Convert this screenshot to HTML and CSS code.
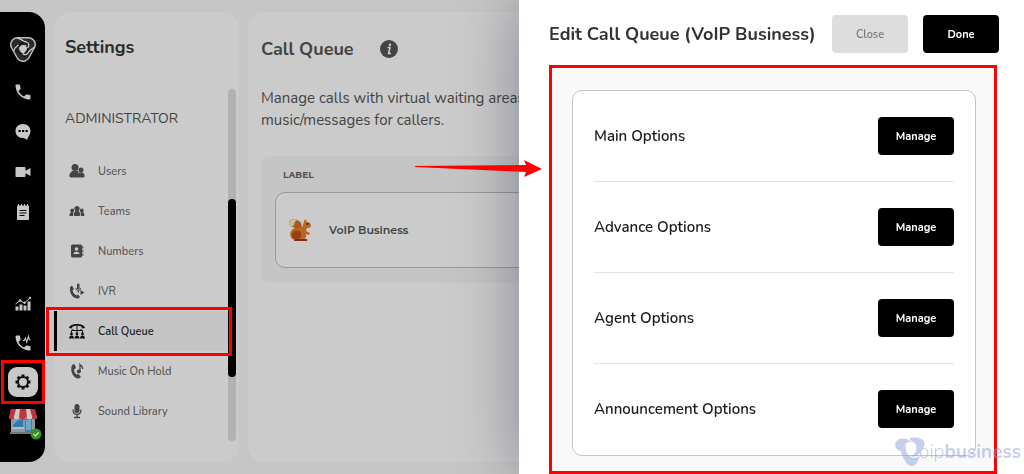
FILE: index.html
```html
<!DOCTYPE html>
<html lang="en">
	<head>
		<meta charset="UTF-8" />
		<meta name="viewport" content="width=device-width, initial-scale=1.0" />
		<title>Call Queue - Settings</title>
		<link rel="stylesheet" href="styles.css">
	</head>
	<body>
		<div class="app">
			<nav class="rail" aria-label="Main">
				<a href="#" class="rail-logo" aria-label="Home">
					<svg width="28" height="28" viewBox="0 0 28 28">
						<path d="M8.500 8.500h11L14 18.500z" fill="#bdbdbd" stroke="#bdbdbd" stroke-width="15" stroke-linejoin="round" />
						<path d="M8.500 8.500h11L14 18.500z" fill="#2a2a2a" stroke="#2a2a2a" stroke-width="12" stroke-linejoin="round" />
						<path d="M10 10c3-1.500 6-1.500 8.500 0 0 3-1.500 5.500-4.500 8-3-2-4.500-5-4-8z" fill="#c8c8c8" />
						<path d="M10 11c1-4 5-6 9-4M18 10c2 4 1 8-3 11M14.500 18C10 18 7 15 6.500 11" fill="none" stroke="#111" stroke-width="1.500" />
						<path d="M8 2c4 0 5 3.500 9.500 4 3 1 3 4 1 6M25 11c-2 3-5 2.500-6 6-1.500 2.500-4 2-5.500.5M5 15c0-3 2-4 4.500-6" fill="none" stroke="#c8c8c8" stroke-width="1.300" />
					</svg>
				</a>
				<a href="#" aria-label="Calls">
					<svg width="20" height="20" viewBox="0 0 24 24"><path class="solid" d="M6.600 10.800c1.400 2.800 3.800 5.100 6.600 6.600l2.200-2.200c.3-.3.7-.4 1-.2 1.100.4 2.300.6 3.600.6.600 0 1 .4 1 1V20c0 .6-.4 1-1 1C10.600 21 3 13.400 3 4c0-.6.400-1 1-1h3.500c.6 0 1 .4 1 1 0 1.300.2 2.500.6 3.600.1.300 0 .7-.3 1z" /></svg>
				</a>
				<a href="#" aria-label="Messages">
					<svg width="18" height="20" viewBox="0 0 18 20"><path class="solid" d="M9 2c4.400 0 7.500 3 7.500 7 0 3-2 5-3.500 9-1.500-1.500-3-2-4.500-2C4.500 16 1.500 13 1.500 9s3-7 7.500-7z" /><path d="M4.500 8h2.200v2H4.500zM8 8h2.200v2H8zM11.500 8h2.200v2h-2.200z" fill="#000" /></svg>
				</a>
				<a href="#" aria-label="Video">
					<svg width="18" height="14" viewBox="0 0 18 14"><path class="solid" d="M2.500 2h8c.6 0 1 .4 1 1v2.800L16.500 3v8l-5-2.800V11c0 .6-.4 1-1 1h-8c-.6 0-1-.4-1-1V3c0-.6.4-1 1-1z" /></svg>
				</a>
				<a href="#" aria-label="Notes">
					<svg width="16" height="18" viewBox="0 0 16 18"><path class="solid" d="M3 2.500h10c.6 0 1 .4 1 1V16c0 .6-.4 1-1 1H3c-.6 0-1-.4-1-1V3.500c0-.6.400-1 1-1z" /><path d="M3.500 3.500V1M6.500 3.500V1M9.500 3.500V1M12.500 3.500V1" stroke="#c8c8c8" /><path d="M4.500 7.500h7M4.500 10h7M4.500 12.500h5" stroke="#000" stroke-width="1.200" /></svg>
				</a>
				<div class="rail-space"></div>
				<a href="#" class="low" aria-label="Statistics">
					<svg width="18" height="16" viewBox="0 0 18 16"><path class="solid" d="M1.500 10.500h3v4h-3zM5.500 8.500h3v6h-3zM9.500 9.500h3v5h-3zM13.500 5.500h3v9h-3z" /><path d="M1.500 8L6 4.500l4.500 2.500L16 2" fill="none" stroke="#c8c8c8" /><circle class="solid" cx="6" cy="4.500" r="1.200" /><circle class="solid" cx="10.500" cy="6.800" r="1.200" /><circle class="solid" cx="16" cy="2" r="1.200" /></svg>
				</a>
				<a href="#" class="low" aria-label="Call activity">
					<svg width="20" height="20" viewBox="0 0 24 24"><path class="solid" d="M6.600 10.800c1.400 2.800 3.800 5.100 6.600 6.600l2.200-2.200c.3-.3.7-.4 1-.2 1.100.4 2.300.6 3.600.6.600 0 1 .4 1 1V20c0 .6-.4 1-1 1C10.600 21 3 13.400 3 4c0-.6.400-1 1-1h3.500c.6 0 1 .4 1 1 0 1.300.2 2.500.6 3.600.1.300 0 .7-.3 1z" /><path d="M12 9h1.500l1.500-3 1.500 5 2-7 1 4h1.500" fill="none" stroke="#c8c8c8" stroke-width="1.300" /></svg>
				</a>
				<a href="#" class="low marked" aria-label="Settings">
					<span class="gear">
						<svg width="18" height="18" viewBox="0 0 18 18"><circle cx="9" cy="9" r="5" fill="none" stroke="#111" stroke-width="2" /><path d="M9 1.500v2.500M9 14v2.500M1.500 9H4M14 9h2.500M3.700 3.700l1.800 1.800M12.500 12.500l1.800 1.800M3.700 14.300l1.800-1.800M12.500 5.500l1.800-1.800" stroke="#111" stroke-width="3" /></svg>
					</span>
				</a>
				<a href="#" class="low" aria-label="Store">
					<svg width="30" height="28" viewBox="0 0 30 28">
						<path d="M3 10h24v15H3z" fill="#8c9aa3" />
						<path d="M5 13h10v7H5z" fill="#2f7cab" /><path d="M5 13h5l-5 5z" fill="#68a9c8" />
						<path d="M4 20h12v2H4z" fill="#b5bcc0" />
						<path d="M17 12h7v13h-7z" fill="#3d83a8" /><path d="M18 13h5v10h-5z" fill="#6aa9c9" />
						<path d="M3 2h24l2 8H1z" fill="#bd3742" />
						<path d="M8 2h4l-1 8H6zM18 2h4l2 8h-5z" fill="#d2c7c7" />
						<circle cx="3.500" cy="10" r="2.500" fill="#bd3742" /><circle cx="8.500" cy="10" r="2.500" fill="#d2c7c7" /><circle cx="14.500" cy="10" r="3" fill="#bd3742" /><circle cx="21.500" cy="10" r="2.500" fill="#d2c7c7" /><circle cx="26.500" cy="10" r="2.500" fill="#bd3742" />
						<path d="M2 25h26v2H2z" fill="#6e7880" />
					</svg>
					<svg class="tick" width="12" height="12" viewBox="0 0 12 12"><circle cx="6" cy="6" r="5.500" fill="#35921f" /><path d="M3.500 6l2 2 3.200-3.500" fill="none" stroke="#ddd" stroke-width="1.200" /></svg>
				</a>
			</nav>

			<aside class="settings">
				<h2>Settings</h2>
				<div class="settings-scroll">
					<div class="settings-list">
						<h3>ADMINISTRATOR</h3>
						<a href="#" class="item">
							<svg width="16" height="16" viewBox="0 0 16 16"><circle cx="6" cy="4.500" r="3.500" /><path d="M3 8h6l1 3-1 3.500H2.500c-2.500 0-2.500-2.500-1.500-4z" /><circle cx="12" cy="7" r="2.500" /><path d="M10.500 9.500h3c2.500 1.500 3 5 .5 5h-3.500c-2.500 0-2-3.500 0-5z" /></svg>
							<span>Users</span>
						</a>
						<a href="#" class="item">
							<svg width="16" height="16" viewBox="0 0 16 16"><circle cx="8" cy="5.500" r="2.600" /><circle cx="3.200" cy="7.500" r="1.900" /><circle cx="12.800" cy="7.500" r="1.900" /><path d="M6.500 8h3c2 1.500 2.500 5 .5 5H6c-2 0-1.500-3.500.5-5z" /><path d="M2.500 9h1.800L4 13H1.500C0 13 0 10.500 2.500 9zM11.700 9h1.800c2.500 1.500 2.500 4 1 4H12z" /></svg>
							<span>Teams</span>
						</a>
						<a href="#" class="item">
							<svg width="16" height="16" viewBox="0 0 16 16"><path d="M3.500 1.500h8c.8 0 1.500.7 1.500 1.500v10c0 .8-.7 1.500-1.500 1.500h-8C2.700 14.500 2 13.800 2 13V3c0-.8.7-1.500 1.500-1.500zM13.300 3h1v2.500h-1zM13.300 6.800h1v2.500h-1zM13.300 10.500h1V13h-1z" /><circle cx="7.500" cy="6" r="1.800" fill="#cbcbcb" /><path d="M4.500 11c0-3 6-3 6 0z" fill="#cbcbcb" /></svg>
							<span>Numbers</span>
						</a>
						<a href="#" class="item">
							<svg width="16" height="16" viewBox="0 0 16 16"><path d="M1 4l2-1.500L5 6 3.500 7.500c.5 2 2 4 4 5L9 11.500l2 2.500-1.500 1.500C4 16 0 10 1 4z" /><path d="M8 1.500c0-1.500 2.500-1.500 2.500 0v4c0 1.500-2.500 1.500-2.500 0z" /><path d="M7 5c0 3.500 4.500 3.500 4.500 0M9.300 7.500v2.300" fill="none" stroke="#444" /><path d="M11.500 7l4 2.500-4 2.500z" /></svg>
							<span>IVR</span>
						</a>
						<a href="#" class="item active">
							<svg width="16" height="16" viewBox="0 0 16 16"><path d="M0 5C1-.5 15-.5 16 5l-3 .5-.5-2c-3-1-6-1-9 0l-.5 2z" /><path d="M2.500 10V7.500h11V10M8 3v8M4 7.500V6M12 7.500V6" fill="none" stroke="#111" /><circle cx="2.500" cy="11" r="1.400" /><circle cx="8" cy="11" r="1.400" /><circle cx="13.500" cy="11" r="1.400" /><path d="M0 15.500c0-4 5-4 5 0zM5.500 15.500c0-4 5-4 5 0zM11 15.500c0-4 5-4 5 0z" /></svg>
							<span>Call Queue</span>
						</a>
						<a href="#" class="item">
							<svg width="16" height="16" viewBox="0 0 16 16"><path d="M3 2l2.500-1L7 5 5 6.500c0 2 1 4 2.500 5l2-.5 2.500 3-2 1.500C4.500 16 .5 8 3 2z" /><path d="M11 9V1.500c1 1.500 3 1.500 2.500 4.500" fill="none" stroke="#444" stroke-width="1.300" /><circle cx="9.800" cy="8.500" r="2" /></svg>
							<span>Music On Hold</span>
						</a>
						<a href="#" class="item">
							<svg width="16" height="16" viewBox="0 0 16 16"><rect x="5.500" y="1" width="5" height="9" rx="2.500" /><path d="M4 6.500c0 6.500 8 6.500 8 0M8 11v3M5 14.500h6" fill="none" stroke="#444" stroke-width="1.300" /></svg>
							<span>Sound Library</span>
						</a>
					</div>
					<div class="scrollbar"><div class="thumb"></div></div>
				</div>
			</aside>

			<main class="content">
				<div class="content-head">
					<h1>Call Queue</h1>
					<svg width="18" height="18" viewBox="0 0 18 18"><circle cx="9" cy="9" r="9" fill="#444" /><circle cx="10" cy="4.800" r="1.200" fill="#ccc" /><path d="M7.500 7.500H10l-1.500 6H11" fill="none" stroke="#ccc" stroke-width="1.500" /></svg>
				</div>
				<p>Manage calls with virtual waiting areas<br>music/messages for callers.</p>
				<section class="queues">
					<h4>LABEL</h4>
					<div class="queue">
						<svg width="24" height="24" viewBox="0 0 24 24">
							<path d="M9 21C1 21 1 12 7 10 5 8 1 9 1 5c0-3 4-5 8-3 5 2 6 6 3 10z" fill="#a65c20" />
							<path d="M1 6c0-4 4-6 8-4C6 3 7 7 5 8 3 8 1 8 1 6z" fill="#cbbda5" />
							<path d="M17 1l2 3c3 0 4 2 4 4-1 2-3 2-4 2l-1 3 4 2-1 2-3-1c1 3-1 5-3 6H7c-7-1-6-11 1-12 3 0 5 0 7-2 0-2 1-5 2-7z" fill="#b86620" />
							<path d="M4 17c0-4 7-6 9-2 1 3-1 6-4 6-3 1-5-1-5-4z" fill="#963f12" />
							<path d="M9 21h9c2 0 2 2 0 2H7c-2 0-1-2 2-2z" fill="#7a2f11" />
							<circle cx="19.500" cy="6" r="1" fill="#321" />
						</svg>
						<strong>VoIP Business</strong>
					</div>
				</section>
			</main>
		</div>

		<div class="drawer" role="dialog" aria-labelledby="drawer-title">
			<header class="drawer-head">
				<h2 id="drawer-title">Edit Call Queue (VoIP Business)</h2>
				<button type="button" class="close">Close</button>
				<button type="button">Done</button>
			</header>
			<div class="options-area">
				<ul class="options">
					<li><span>Main Options</span><button type="button">Manage</button></li>
					<li><span>Advance Options</span><button type="button">Manage</button></li>
					<li><span>Agent Options</span><button type="button">Manage</button></li>
					<li><span>Announcement Options</span><button type="button">Manage</button></li>
				</ul>
			</div>
			<svg class="arrow" width="128" height="20" viewBox="0 0 128 20"><path d="M0 7l111-1-2-5 18 9-18 8 2-5L0 8z" fill="#f00" /></svg>
			<div class="watermark">
				<svg width="30" height="30" viewBox="0 0 30 30">
					<path d="M6 14C0 13-1 7 1.500 4 4 1 9 1 12 2c2 1 4 3 6 3-6-1-10 3-11 9z" />
					<path d="M14 1.500c6-2 14-1 15.500 4C30 9 28 13 25 16c-3 3-6 4-9 4 5-3 7-9 4-14-2-.5-4-2-6-4.500z" />
					<path d="M6 15c1-4 3-7 5-8-1 6 1 12 7 14 3 0 5-1 7-2-2 5-4 10-8 10-5 0-8-6-11-14z" />
				</svg>
				<span>oip</span><b>business</b>
			</div>
		</div>
	</body>
</html>
```
FILE: styles.css
```css
* {
	box-sizing: border-box;
}
body {
	margin: 0;
	font-family: Nunito, Lato, sans-serif;
	background-color: #c6c6c6;
	color: #444;
	overflow: hidden;
}
h1,
h2,
h3,
h4,
p,
ul {
	margin: 0;
	padding: 0;
}
h1,
h2 {
	font-size: 18px;
	line-height: 24px;
}
a {
	color: inherit;
	text-decoration: none;
}
svg {
	display: block;
	flex: none;
}
.app {
	display: flex;
	gap: 9px;
	height: 100vh;
	padding: 12px 0;
}

/* left icon rail */
.rail {
	display: flex;
	flex-direction: column;
	width: 45px;
	padding: 16px 0 22px;
	background: #000;
	border-radius: 0 16px 16px 0;
}
.rail a {
	position: relative;
	display: flex;
	align-items: center;
	justify-content: center;
	height: 40px;
}
.rail .rail-logo {
	height: 44px;
}
.rail .low {
	height: 39px;
}
.rail-space {
	flex: 1;
}
.solid {
	fill: #c8c8c8;
}
.gear {
	display: flex;
	align-items: center;
	justify-content: center;
	width: 30px;
	height: 30px;
	background: #c8c8c8;
	border-radius: 9px;
}
.marked::after {
	content: "";
	position: absolute;
	inset: -2px 0 -3px 1px;
	border: 3px solid #f00;
}
.tick {
	position: absolute;
	right: 3px;
	bottom: 0;
}

/* settings menu */
.settings {
	width: 185px;
	padding: 23px 3px 21px 0;
	background: #cbcbcb;
	border-radius: 16px;
	display: flex;
	flex-direction: column;
}
.settings h2 {
	height: 54px;
	padding-left: 11px;
	color: #2b2b2b;
}
.settings-scroll {
	flex: 1;
	display: flex;
}
.settings-list {
	flex: 1;
}
.settings h3 {
	padding: 19px 0 21px 11px;
	font-size: 14px;
	line-height: 22px;
	font-weight: normal;
}
.item {
	position: relative;
	display: flex;
	align-items: center;
	gap: 13px;
	height: 40px;
	padding-left: 15px;
	font-size: 11px;
	font-weight: 500;
	color: #555;
}
.item svg {
	fill: #444;
}
.active {
	background: #c5c5c5;
	border-left: 3px solid #000;
	padding-left: 12px;
	color: #222;
	font-weight: 600;
}
.active svg {
	fill: #111;
}
.active::after {
	content: "";
	position: absolute;
	inset: -4px -4px -5px -11px;
	border: 3px solid #f00;
	z-index: 1;
}
.scrollbar {
	width: 8px;
	padding-top: 110px;
	background: #b2b2b2;
	border-radius: 4px;
}
.thumb {
	height: 178px;
	background: #000;
	border-radius: 4px;
}

/* page behind the drawer */
.content {
	flex: 1;
	padding: 25px 0 0 13px;
	background: #cbcbcb;
	border-radius: 16px;
}
.content-head {
	display: flex;
	align-items: center;
	gap: 26px;
}
.content p {
	padding: 26px 0 25px;
	font-size: 15px;
	line-height: 22px;
}
.queues {
	padding: 12px 0 15px 14px;
	background: #c5c5c5;
	border-radius: 10px;
}
.queues h4 {
	padding-left: 8px;
	font-family: Montserrat, Inter, sans-serif;
	font-size: 9px;
	line-height: 14px;
	margin-bottom: 10px;
	color: #555;
}
.queue {
	display: flex;
	align-items: center;
	gap: 17px;
	height: 76px;
	padding-left: 12px;
	background: #cbcbcb;
	border: 1px solid #999;
	border-radius: 10px;
	font-family: Montserrat, Inter, sans-serif;
	font-size: 11px;
}
.queue strong {
	font-weight: 600;
}

/* edit drawer */
.drawer {
	position: fixed;
	top: 0;
	right: 0;
	bottom: 0;
	width: 505px;
	max-width: 100%;
	padding: 15px 25px 0 30px;
	background: #fff;
	box-shadow: 0 0 60px rgba(0, 10, 40, 0.35);
}
.drawer-head {
	display: flex;
	align-items: center;
	gap: 15px;
	margin-bottom: 12px;
}
.drawer-head h2 {
	flex: 1;
	min-width: 0;
	white-space: nowrap;
	color: #333;
}
button {
	flex: none;
	width: 76px;
	height: 38px;
	padding: 0;
	background: #000;
	color: #fff;
	border: none;
	border-radius: 4px;
	font-family: inherit;
	font-size: 11px;
	font-weight: bold;
	cursor: pointer;
}
.close {
	background: #ddd;
	color: #777;
	font-weight: 600;
}
.options-area {
	margin-right: 2px;
	padding: 22px 18px 15px 20px;
	background: #f9f9f9;
	border: 3px solid #f00;
}
.options {
	list-style: none;
	padding: 0 21px 1px;
	background: #fff;
	border: 1px solid #c4c4c4;
	border-radius: 10px;
}
.options li {
	display: flex;
	align-items: center;
	justify-content: space-between;
	height: 90px;
	box-sizing: content-box;
	font-size: 15px;
	font-weight: 600;
	color: #1b1b1b;
}
.options li + li {
	border-top: 1px solid #e2e2e2;
}
.arrow {
	position: absolute;
	left: -104px;
	top: 159px;
}
.watermark {
	position: absolute;
	left: 376px;
	right: 0;
	bottom: 7px;
	display: flex;
	align-items: center;
	color: #8fa0dc;
	opacity: 0.5;
	font-size: 19px;
	line-height: 24px;
}
.watermark span {
	font-weight: 300;
}
.watermark svg {
	fill: #8fa0dc;
	margin-right: -6px;
}
```
